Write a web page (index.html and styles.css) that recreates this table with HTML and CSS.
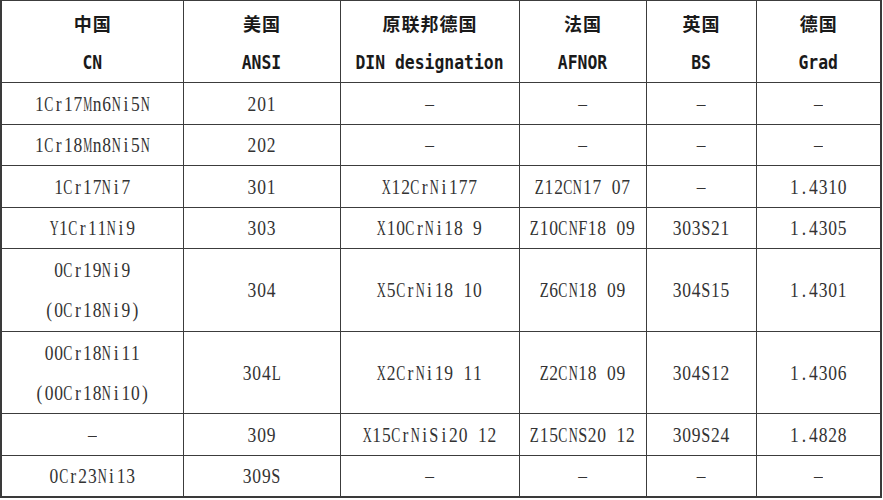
FILE: index.html
```html
<!DOCTYPE html>
<html lang="zh-CN">
<head>
<meta charset="utf-8">
<title>不锈钢牌号对照表</title>
<link rel="stylesheet" href="styles.css">
<script src="script.js" defer></script>
</head>
<body>
<table class="grades">
  <colgroup>
    <col class="c1"><col class="c2"><col class="c3"><col class="c4"><col class="c5"><col class="c6">
  </colgroup>
  <thead>
    <tr class="head">
      <th><div class="zh">中国</div><div class="en">CN</div></th>
      <th><div class="zh">美国</div><div class="en">ANSI</div></th>
      <th><div class="zh">原联邦德国</div><div class="en">DIN designation</div></th>
      <th><div class="zh">法国</div><div class="en">AFNOR</div></th>
      <th><div class="zh">英国</div><div class="en">BS</div></th>
      <th><div class="zh">德国</div><div class="en">Grad</div></th>
    </tr>
  </thead>
  <tbody>
    <tr class="h42">
      <td><div class="ln">1Cr17Mn6Ni5N</div></td>
      <td><div class="ln">201</div></td>
      <td><div class="ln">–</div></td>
      <td><div class="ln">–</div></td>
      <td><div class="ln">–</div></td>
      <td><div class="ln">–</div></td>
    </tr>
    <tr class="h41">
      <td><div class="ln">1Cr18Mn8Ni5N</div></td>
      <td><div class="ln">202</div></td>
      <td><div class="ln">–</div></td>
      <td><div class="ln">–</div></td>
      <td><div class="ln">–</div></td>
      <td><div class="ln">–</div></td>
    </tr>
    <tr class="h42">
      <td><div class="ln">1Cr17Ni7</div></td>
      <td><div class="ln">301</div></td>
      <td><div class="ln">X12CrNi177</div></td>
      <td><div class="ln">Z12CN17 07</div></td>
      <td><div class="ln">–</div></td>
      <td><div class="ln">1.4310</div></td>
    </tr>
    <tr class="h41">
      <td><div class="ln">Y1Cr11Ni9</div></td>
      <td><div class="ln">303</div></td>
      <td><div class="ln">X10CrNi18 9</div></td>
      <td><div class="ln">Z10CNF18 09</div></td>
      <td><div class="ln">303S21</div></td>
      <td><div class="ln">1.4305</div></td>
    </tr>
    <tr class="h83">
      <td><div class="ln">0Cr19Ni9</div><div class="ln">(0Cr18Ni9)</div></td>
      <td><div class="ln">304</div></td>
      <td><div class="ln">X5CrNi18 10</div></td>
      <td><div class="ln">Z6CN18 09</div></td>
      <td><div class="ln">304S15</div></td>
      <td><div class="ln">1.4301</div></td>
    </tr>
    <tr class="h82">
      <td><div class="ln">00Cr18Ni11</div><div class="ln">(00Cr18Ni10)</div></td>
      <td><div class="ln">304L</div></td>
      <td><div class="ln">X2CrNi19 11</div></td>
      <td><div class="ln">Z2CN18 09</div></td>
      <td><div class="ln">304S12</div></td>
      <td><div class="ln">1.4306</div></td>
    </tr>
    <tr class="h42">
      <td><div class="ln">–</div></td>
      <td><div class="ln">309</div></td>
      <td><div class="ln">X15CrNiSi20 12</div></td>
      <td><div class="ln">Z15CNS20 12</div></td>
      <td><div class="ln">309S24</div></td>
      <td><div class="ln">1.4828</div></td>
    </tr>
    <tr class="h41">
      <td><div class="ln">0Cr23Ni13</div></td>
      <td><div class="ln">309S</div></td>
      <td><div class="ln">–</div></td>
      <td><div class="ln">–</div></td>
      <td><div class="ln">–</div></td>
      <td><div class="ln">–</div></td>
    </tr>
  </tbody>
</table>
</body>
</html>
```

FILE: styles.css
```css
html, body {
  margin: 0;
  padding: 0;
  background: #ffffff;
}

.grades {
  border-collapse: collapse;
  table-layout: fixed;
  width: 882px;
  border-top: 1px solid #7a7a7a;
  border-left: 2px solid #3a3a3a;
  border-right: 2px solid #3a3a3a;
  border-bottom: 2px solid #3a3a3a;
  box-shadow: 0 2px 0 #cfcfcf;
  color: #333333;
}

.c1 { width: 182px; }
.c2 { width: 157px; }
.c3 { width: 179px; }
.c4 { width: 127px; }
.c5 { width: 110px; }
.c6 { width: 125px; }

.grades th,
.grades td {
  border: 1px solid #3c3c3c;
  padding: 0;
  text-align: center;
  vertical-align: middle;
  white-space: nowrap;
}

.head { height: 82px; }
.h42 { height: 42px; }
.h41 { height: 41px; }
.h83 { height: 83px; }
.h82 { height: 82px; }

.zh {
  font-family: "Noto Sans CJK SC", sans-serif;
  font-weight: 700;
  font-size: 18px;
  letter-spacing: 1px;
  text-indent: 1px;
  line-height: 40px;
  color: #1a1a1a;
  position: relative;
  top: 1px;
}

.en {
  font-family: "DejaVu Sans Mono", monospace;
  font-weight: 700;
  font-size: 16.4px;
  line-height: 40px;
  color: #1a1a1a;
  transform: scaleY(1.17);
  position: relative;
  top: 1px;
}

.ln {
  font-family: "Liberation Serif", serif;
  font-size: 17.5px;
  line-height: 40px;
  color: #333333;
  transform: scaleY(1.2);
}

.ch {
  display: inline-flex;
  justify-content: center;
  width: 9.6px;
}

.g {
  display: inline-block;
  transform-origin: 50% 50%;
}
```

FILE: script.js
```js
document.querySelectorAll('.ln').forEach(function (el) {
  var text = el.textContent;
  el.textContent = '';
  Array.from(text).forEach(function (c) {
    var cell = document.createElement('span');
    cell.className = 'ch';
    var g = document.createElement('span');
    g.className = 'g';
    g.textContent = c;
    cell.appendChild(g);
    el.appendChild(cell);
  });
});

var MAX = 9.3;
document.querySelectorAll('.g').forEach(function (g) {
  var w = g.offsetWidth;
  if (w > MAX) {
    g.style.transform = 'scaleX(' + (MAX / w).toFixed(3) + ')';
  }
});
```
